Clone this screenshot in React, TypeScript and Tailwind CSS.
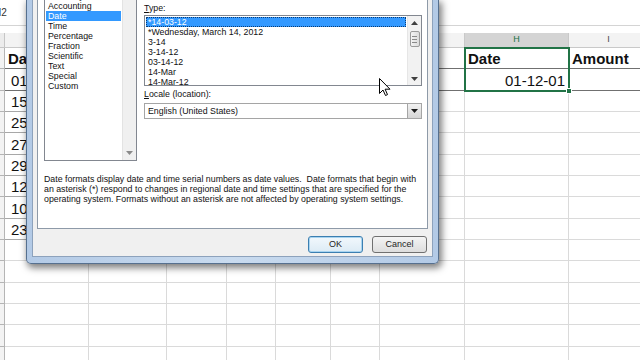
const widths = ["w-[84px]", "w-[78px]", "w-[60px]", "w-[49px]", "w-[55px]", "w-[49px]", "w-[85px]", "w-[104px]", "w-[80px]"];
const letters = ["A", "B", "C", "D", "E", "F", "G", "H", "I"];
const colA = ["Date", "01-12-01", "15-03-02", "25-07-03", "27-10-04", "29-01-05", "12-06-06", "10-09-07", "23-11-08"];

const categories = ["Currency", "Accounting", "Date", "Time", "Percentage", "Fraction", "Scientific", "Text", "Special", "Custom"];
const types = ["*14-03-12", "*Wednesday, March 14, 2012", "3-14", "3-14-12", "03-14-12", "14-Mar", "14-Mar-12"];

function cellText(row: number, col: number) {
  if (col === 0) return colA[row] ?? "";
  if (row === 0 && col === 7) return "Date";
  if (row === 0 && col === 8) return "Amount";
  if (row === 1 && col === 7) return "01-12-01";
  return "";
}

function Sheet() {
  const rows = Array.from({ length: 15 }, (_, i) => i);
  return (
    <div className="flex flex-col font-['Liberation_Sans',Arial,sans-serif] text-[#111]">
      <div className="h-[26px] border-b border-[#d4d4d4] flex items-center overflow-hidden">
        <span className="-ml-[6px] text-[10px] text-[#333]">H2</span>
      </div>
      <div className="h-[7px]" />
      <div className="flex h-[15px]">
        <div className="w-[5px] shrink-0 bg-[#ececec] border-r border-b border-[#c6c6c6]" />
        {letters.map((l, c) => (
          <div
            key={l}
            className={`${widths[c]} shrink-0 border-r border-b border-[#c9c9c9] flex items-center justify-center text-[9px] ${
              c === 7 ? "bg-[#d4d4d4] text-[#217346]" : "bg-[#f3f3f3] text-[#444]"
            }`}
          >
            {l}
          </div>
        ))}
      </div>
      <div className="relative">
        {rows.map((r) => (
          <div key={r} className="flex h-[21.35px]">
            <div className="w-[5px] shrink-0 bg-[#f3f3f3] border-r border-b border-[#b5b5b5]" />
            {letters.map((l, c) => {
              const dark = r < 2;
              const tableA = c === 0 && r < 9;
              return (
                <div
                  key={l}
                  className={`${widths[c]} shrink-0 border-r border-b flex items-end overflow-hidden whitespace-nowrap text-[15px] leading-[17px] pb-[1px] ${
                    dark ? "border-b-[#707070]" : tableA ? "border-b-[#a8a8a8]" : "border-b-[#dadada]"
                  } border-r-[#dadada] ${r === 0 ? "font-bold" : ""} ${
                    c === 7 && r === 1 ? "justify-end pr-[3px]" : c === 0 && r > 0 ? "pl-[6px]" : "pl-[3px]"
                  }`}
                >
                  {cellText(r, c)}
                </div>
              );
            })}
          </div>
        ))}
        <div className="absolute left-[464px] -top-[1px] w-[106px] h-[45px] border-2 border-[#217346]">
          <div className="absolute -right-[4px] -bottom-[4px] w-[6px] h-[6px] bg-[#217346] border border-white" />
        </div>
      </div>
    </div>
  );
}

function Arrow({ down, color = "#404040" }: { down?: boolean; color?: string }) {
  return (
    <svg width="7" height="4" viewBox="0 0 7 4">
      <polygon points={down ? "0,0 7,0 3.5,4" : "0,4 7,4 3.5,0"} fill={color} />
    </svg>
  );
}

function CategoryList() {
  return (
    <div className="w-[93px] h-[161px] shrink-0 flex border-x border-b border-[#828790] bg-white overflow-hidden">
      <div className="flex-1 -mt-[9px] px-[1px]">
        {categories.map((c) => (
          <div
            key={c}
            className={`h-[10px] leading-[10px] pl-[2px] whitespace-nowrap overflow-hidden ${
              c === "Date" ? "bg-[#3399ff] text-white" : ""
            }`}
          >
            {c}
          </div>
        ))}
      </div>
      <div className="w-[14px] bg-[#f0f0f0] border-l border-[#e3e3e3] flex flex-col justify-end items-center pb-[5px]">
        <Arrow down color="#8a8a8a" />
      </div>
    </div>
  );
}

function TypeColumn() {
  return (
    <div className="flex-1 flex flex-col">
      <div className="mt-[3px] h-[10px] leading-[10px]">
        <span className="underline">T</span>ype:
      </div>
      <div className="mt-[2px] h-[71px] flex border border-[#828790] bg-white">
        <div className="flex-1 pt-[1px] px-[1px]">
          {types.map((t, i) => (
            <div
              key={t}
              className={`h-[10px] leading-[10px] pl-[2px] whitespace-nowrap overflow-hidden ${
                i === 0 ? "bg-[#3399ff] text-white outline-1 outline-dotted outline-[#0a3d75] -outline-offset-1" : ""
              }`}
            >
              {t}
            </div>
          ))}
        </div>
        <div className="w-[14px] bg-[#f2f2f2] border-l border-[#e6e6e6] flex flex-col items-center">
          <div className="h-[13px] flex items-center justify-center">
            <Arrow />
          </div>
          <div className="mt-[2px] w-[10px] h-[16px] rounded-[2px] border border-[#9b9b9b] bg-gradient-to-r from-[#f4f4f4] to-[#dcdcdc] flex flex-col items-center justify-center gap-[2px]">
            <div className="w-[5px] h-px bg-[#8a8a8a]" />
            <div className="w-[5px] h-px bg-[#8a8a8a]" />
            <div className="w-[5px] h-px bg-[#8a8a8a]" />
          </div>
          <div className="flex-1" />
          <div className="h-[13px] flex items-center justify-center">
            <Arrow down />
          </div>
        </div>
      </div>
      <div className="mt-[3px] h-[10px] leading-[10px]">
        <span className="underline">L</span>ocale (location):
      </div>
      <div className="mt-[4px] h-[16px] flex items-center border border-[#a5a5a5] bg-white">
        <div className="flex-1 pl-[3px] leading-[10px]">English (United States)</div>
        <div className="w-[14px] h-full border-l border-[#a5a5a5] bg-gradient-to-b from-[#f2f2f2] to-[#d5d5d5] flex items-center justify-center">
          <Arrow down color="#1a1a1a" />
        </div>
      </div>
    </div>
  );
}

function FormatDialog() {
  return (
    <div className="absolute left-[26px] top-0 w-[413px] h-[264px] flex flex-col bg-gradient-to-r from-[#b3cae6] via-[#c9dbef] to-[#b3cae6] border-x border-b border-[#56708f] rounded-b-[5px] px-[5px] pb-[6px] shadow-[2px_3px_7px_1px_rgba(0,0,0,0.5)] font-['Liberation_Sans',Arial,sans-serif] text-[8.8px] text-[#111]">
      <div className="flex-1 flex flex-col bg-[#f0f0f0] border-x border-b border-[#8da2bc] px-[4px]">
        <div className="h-[229px] flex flex-col bg-white border-x border-b border-[#8e9aa8]">
          <div className="flex gap-[7px] pl-[6px] pr-[5px]">
            <CategoryList />
            <TypeColumn />
          </div>
          <div className="mt-[13px] pl-[6px] leading-[10px] whitespace-nowrap">
            <div>Date formats display date and time serial numbers as date values.&nbsp; Date formats that begin with</div>
            <div>an asterisk (*) respond to changes in regional date and time settings that are specified for the</div>
            <div>operating system. Formats without an asterisk are not affected by operating system settings.</div>
          </div>
        </div>
        <div className="flex-1 flex justify-end items-start gap-[9px] pt-[7px] pr-[1px]">
          <button className="w-[55px] h-[17px] rounded-[3px] border border-[#3c7fb1] bg-gradient-to-b from-[#f2f8fc] to-[#dcebf5] shadow-[0_0_0_1px_#a8d4f0_inset] text-[9px] text-[#1e1e1e]">
            OK
          </button>
          <button className="w-[55px] h-[17px] rounded-[3px] border border-[#707070] bg-gradient-to-b from-[#f4f4f4] to-[#dddddd] text-[9px] text-[#1e1e1e]">
            Cancel
          </button>
        </div>
      </div>
    </div>
  );
}

function Cursor() {
  return (
    <svg className="absolute left-[379px] top-[78px]" width="12" height="19" viewBox="0 0 12 19">
      <path d="M0.5 0.5 L0.5 15.5 L4 12 L6.5 17.5 L8.5 16.6 L6.1 11.2 L11 11.2 Z" fill="white" stroke="black" strokeWidth="1" strokeLinejoin="round" />
    </svg>
  );
}

export default function App() {
  return (
    <div className="relative w-[640px] h-[360px] overflow-hidden bg-white">
      <Sheet />
      <FormatDialog />
      <Cursor />
    </div>
  );
}
